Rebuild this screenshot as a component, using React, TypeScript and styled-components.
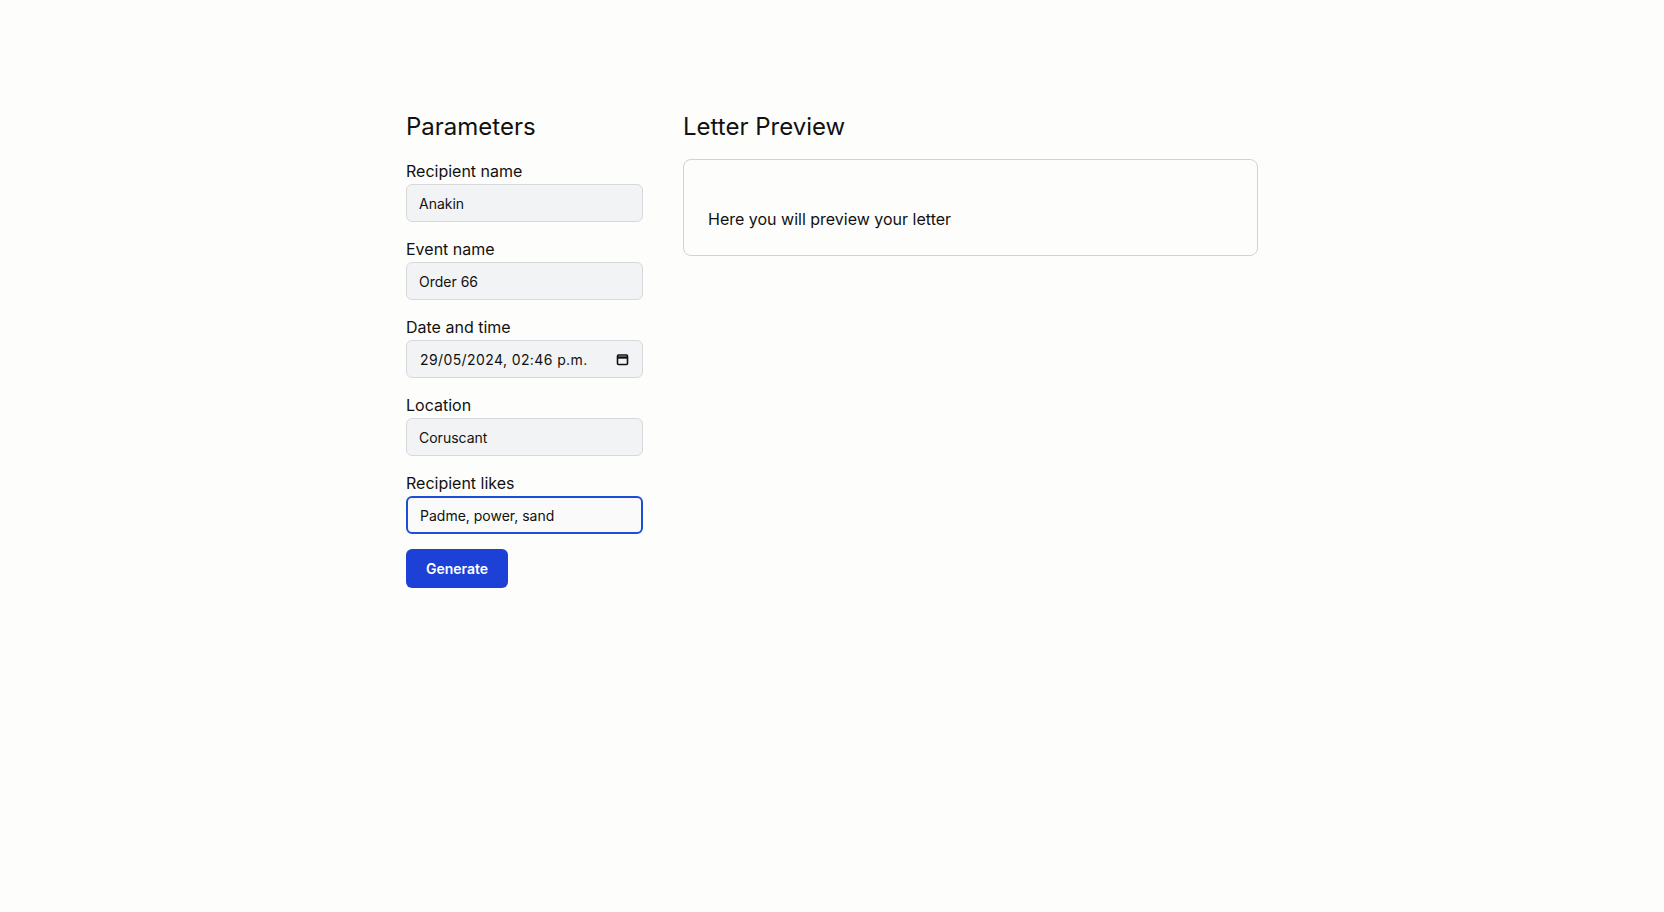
import React from 'react';
import styled, { createGlobalStyle } from 'styled-components';

const Global = createGlobalStyle`
  body { margin: 0; background: #fdfdfb; font-family: Inter, "Noto Sans", sans-serif; color: #111; }
`;

const Page = styled.div`
  display: flex;
  justify-content: center;
  gap: 40px;
  padding-top: 112px;
  min-height: 912px;
  box-sizing: border-box;
`;

const Column = styled.div<{ $w: number }>`
  width: ${p => p.$w}px;
  display: flex;
  flex-direction: column;
`;

const Heading = styled.h2`
  font-size: 24px;
  font-weight: 400;
  margin: 0 0 19px;
  line-height: 30px;
`;

const Field = styled.label`
  display: flex;
  flex-direction: column;
  margin-bottom: 17px;
`;

const Label = styled.span`
  font-size: 16px;
  line-height: 20px;
  margin-bottom: 3px;
`;

const Input = styled.input<{ $focus?: boolean }>`
  height: 38px;
  box-sizing: border-box;
  padding: 0 12px;
  font-family: Inter, sans-serif;
  font-size: 14px;
  color: #111;
  background: ${p => (p.$focus ? '#fafafa' : '#f2f3f4')};
  border: ${p => (p.$focus ? '2px solid #1d4ed8' : '1px solid #d6d8db')};
  border-radius: 6px;
  outline: none;
`;

const DateBox = styled.div`
  height: 38px;
  box-sizing: border-box;
  display: flex;
  align-items: center;
  padding: 0 13px;
  background: #f2f3f4;
  border: 1px solid #d6d8db;
  border-radius: 6px;
`;

const DateText = styled.input`
  flex: 1;
  min-width: 0;
  border: none;
  background: transparent;
  outline: none;
  padding: 0;
  font-family: Inter, sans-serif;
  font-size: 14px;
  letter-spacing: 0.4px;
  color: #111;
`;

const Button = styled.button`
  align-self: flex-start;
  height: 39px;
  width: 102px;
  margin-top: -2px;
  background: #1d40d6;
  color: #fff;
  font-family: Inter, sans-serif;
  font-weight: 600;
  font-size: 14px;
  border: none;
  border-radius: 6px;
`;

const Preview = styled.div`
  margin-top: -2px;
  border: 1px solid #cfd3da;
  border-radius: 8px;
  height: 97px;
  box-sizing: border-box;
  padding: 49px 24px 0;
  font-size: 16px;
`;

const Calendar = () => (
  <svg width="13" height="13" viewBox="0 0 13 13" fill="none" stroke="#111" strokeWidth="1.6">
    <rect x="1.5" y="2" width="10" height="9.5" rx="1" />
    <line x1="1.5" y1="4.5" x2="11.5" y2="4.5" strokeWidth="2.4" />
  </svg>
);

export default function App() {
  return (
    <>
      <Global />
      <Page>
        <Column $w={237}>
          <Heading>Parameters</Heading>
          <Field><Label>Recipient name</Label><Input defaultValue="Anakin" /></Field>
          <Field><Label>Event name</Label><Input defaultValue="Order 66" /></Field>
          <Field>
            <Label>Date and time</Label>
            <DateBox>
              <DateText defaultValue="29/05/2024, 02:46 p.m." />
              <Calendar />
            </DateBox>
          </Field>
          <Field><Label>Location</Label><Input defaultValue="Coruscant" /></Field>
          <Field><Label>Recipient likes</Label><Input $focus defaultValue="Padme, power, sand" /></Field>
          <Button>Generate</Button>
        </Column>
        <Column $w={575}>
          <Heading>Letter Preview</Heading>
          <Preview>Here you will preview your letter</Preview>
        </Column>
      </Page>
    </>
  );
}
